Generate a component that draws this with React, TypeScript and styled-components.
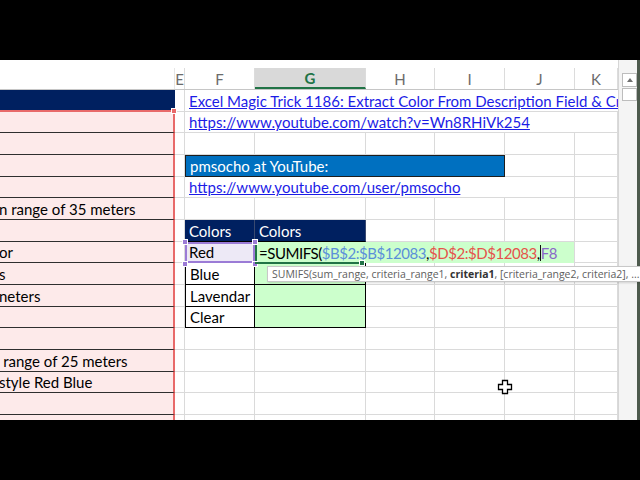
import styled, { createGlobalStyle, css } from "styled-components";

const GlobalStyle = createGlobalStyle`
  html, body { margin: 0; padding: 0; background: #000; }
  body { font-family: Lato, "Liberation Sans", sans-serif; }
`;

const COLS = "175px 10px 70px 111px 69px 70px 70px 43px";
const LETTERS = ["", "E", "F", "G", "H", "I", "J", "K"];

type Kind =
  | "plain"
  | "pink"
  | "navyTop"
  | "link"
  | "bar"
  | "head"
  | "box"
  | "green"
  | "edit"
  | "picked";

const Screen = styled.div`
  width: 640px;
  height: 480px;
  display: flex;
  flex-direction: column;
  background: #000;
  overflow: hidden;
`;

const Letterbox = styled.div`
  height: 60px;
  flex: none;
  background: #000;
`;

const Workbook = styled.div`
  height: 360px;
  flex: none;
  display: flex;
  background: #fff;
  position: relative;
  overflow: hidden;
`;

const Grid = styled.div`
  width: 618px;
  flex: none;
  padding-top: 8px;
  overflow: hidden;
`;

const HeaderRow = styled.div`
  display: grid;
  grid-template-columns: ${COLS};
  height: 22px;
  box-sizing: border-box;
  border-bottom: 1px solid #c6c6c6;
`;

const ColHead = styled.div<{ $active?: boolean; $blank?: boolean }>`
  display: flex;
  align-items: center;
  justify-content: center;
  box-sizing: border-box;
  border-right: 1px solid #dcdcdc;
  font-size: 15px;
  color: #6b6b6b;
  ${(p) =>
    p.$active &&
    css`
      background: #d9d9d9;
      color: #217346;
      font-weight: 700;
      border-bottom: 2px solid #217346;
    `}
  ${(p) =>
    p.$blank &&
    css`
      border-right: 1px solid #e6e6e6;
    `}
`;

const Row = styled.div`
  display: grid;
  grid-template-columns: ${COLS};
  height: 21.67px;
`;

const kindStyles: Record<Kind, ReturnType<typeof css> | string> = {
  plain: "",
  pink: css`
    background: #fdeaea;
    border-bottom: 1px solid #2f2f2f;
    border-right: 2px solid #e86a6a;
    padding-left: 0;
  `,
  navyTop: css`
    background: #002060;
    border-right: none;
    border-bottom: 2px solid #e86a6a;
  `,
  link: css`
    color: #1c1ce6;
    text-decoration: underline;
    text-underline-offset: 1px;
    border-right: none;
  `,
  bar: css`
    background: #0070c0;
    color: #fff;
    border: 1px solid #1d1d1d;
  `,
  head: css`
    background: #002060;
    color: #fff;
    border-right: 1px solid #3a4a70;
    border-bottom: 1px solid #000;
  `,
  box: css`
    border-left: 1px solid #000;
    border-right: 1px solid #000;
    border-bottom: 1px solid #000;
  `,
  green: css`
    background: #ccffcc;
    border-right: 1px solid #000;
    border-bottom: 1px solid #000;
  `,
  edit: css`
    background: #ccffcc;
    border-left: 2px solid #217346;
    border-bottom: none;
    padding-left: 2px;
    letter-spacing: -0.45px;
  `,
  picked: css`
    background: #ede9f6;
    border: 2px solid #9b7bd6;
    padding-left: 2px;
    padding-bottom: 0;
  `,
};

const Cell = styled.div<{ $kind: Kind; $span: number; $shift: number }>`
  grid-column: span ${(p) => p.$span};
  box-sizing: border-box;
  display: flex;
  align-items: flex-end;
  padding: 0 3px 1px 4px;
  white-space: nowrap;
  overflow: hidden;
  font-size: 15px;
  line-height: 17px;
  color: #000;
  border-right: 1px solid #dadada;
  border-bottom: 1px solid #dadada;
  ${(p) => kindStyles[p.$kind]}
  & > span {
    margin-left: ${(p) => p.$shift}px;
  }
`;

const Ref = styled.span<{ $tone: "blue" | "red" | "purple" }>`
  color: ${(p) =>
    p.$tone === "blue" ? "#5b8fd9" : p.$tone === "red" ? "#e5534b" : "#8a68c8"};
`;

const Caret = styled.i`
  display: inline-block;
  width: 1px;
  height: 16px;
  background: #111;
  vertical-align: -2px;
`;

const Scrollbar = styled.div`
  width: 22px;
  flex: none;
  display: flex;
  flex-direction: column;
  align-items: flex-start;
  padding: 13px 0 0 3px;
  box-sizing: border-box;
  background: #f4f4f4;
  border-left: 1px solid #d6d6d6;
  border-right: 3px solid #4d5a4d;
`;

const ArrowButton = styled.div`
  width: 15px;
  height: 14px;
  box-sizing: border-box;
  border: 1px solid #bdbdbd;
  background: #fff;
  display: flex;
  align-items: center;
  justify-content: center;
  &::after {
    content: "";
    border-left: 3px solid transparent;
    border-right: 3px solid transparent;
    border-bottom: 4px solid #707070;
  }
`;

const Thumb = styled.div`
  width: 15px;
  height: 13px;
  margin-top: 1px;
  box-sizing: border-box;
  border: 1px solid #bdbdbd;
  background: #fff;
`;

const Tooltip = styled.div`
  position: absolute;
  left: 267px;
  top: 206px;
  width: 390px;
  height: 16px;
  box-sizing: border-box;
  padding: 0 0 0 4px;
  background: #fff;
  border: 1px solid #c8c8c8;
  box-shadow: 1px 1px 2px rgba(0, 0, 0, 0.15);
  font-family: "Open Sans", "Noto Sans", sans-serif;
  font-size: 10.5px;
  line-height: 14px;
  color: #5e5e5e;
  white-space: nowrap;
  b {
    color: #333;
  }
`;

const Handle = styled.div<{ $x: number; $y: number; $color: string }>`
  position: absolute;
  left: ${(p) => p.$x - 3}px;
  top: ${(p) => p.$y - 3}px;
  width: 6px;
  height: 6px;
  background: ${(p) => p.$color};
  border: 1px solid #fff;
  box-sizing: border-box;
`;

const ActiveEdge = styled.div`
  position: absolute;
  left: 255px;
  top: 202px;
  width: 107px;
  height: 2px;
  background: #217346;
`;

const Pointer = styled.svg`
  position: absolute;
  left: 497px;
  top: 319px;
`;

type CellDef = { kind?: Kind; span?: number; text?: React.ReactNode; shift?: number };

const pink = (text?: string, shift = 0): CellDef => ({ kind: "pink", text, shift });
const blanks = (n: number): CellDef[] => Array.from({ length: n }, () => ({}));

const formula = (
  <span>
    =SUMIFS(<Ref $tone="blue">$B$2:$B$12083</Ref>,<Ref $tone="red">$D$2:$D$12083</Ref>,
    <Caret />
    <Ref $tone="purple">F8</Ref>
  </span>
);

const rows: CellDef[][] = [
  [
    { kind: "navyTop" },
    {},
    { kind: "link", span: 6, text: "Excel Magic Trick 1186: Extract Color From Description Field & Create Report" },
  ],
  [pink(), {}, { kind: "link", span: 5, text: "https://www.youtube.com/watch?v=Wn8RHiVk254" }, {}],
  [pink(), ...blanks(7)],
  [pink(), {}, { kind: "bar", span: 4, text: "pmsocho at YouTube:" }, {}, {}],
  [pink(), {}, { kind: "link", span: 4, text: "https://www.youtube.com/user/pmsocho" }, {}, {}],
  [pink("n range of 35 meters", -1), ...blanks(7)],
  [pink(), {}, { kind: "head", text: "Colors" }, { kind: "head", text: "Colors" }, ...blanks(4)],
  [pink("or", -1), {}, { kind: "picked", text: "Red" }, { kind: "edit", span: 4, text: formula }, {}],
  [pink("s", -1), {}, { kind: "box", text: "Blue" }, { kind: "green" }, ...blanks(4)],
  [pink("neters", -1), {}, { kind: "box", text: "Lavendar" }, { kind: "green" }, ...blanks(4)],
  [pink(), {}, { kind: "box", text: "Clear" }, { kind: "green" }, ...blanks(4)],
  [pink(), ...blanks(7)],
  [pink("n range of 25 meters", -9), ...blanks(7)],
  [pink("style Red Blue", -1), ...blanks(7)],
  [pink(), ...blanks(7)],
  [pink(), ...blanks(7)],
];

export default function App() {
  return (
    <Screen>
      <GlobalStyle />
      <Letterbox />
      <Workbook>
        <Grid>
          <HeaderRow>
            {LETTERS.map((l, i) => (
              <ColHead key={i} $active={l === "G"} $blank={l === ""}>
                {l}
              </ColHead>
            ))}
          </HeaderRow>
          {rows.map((cells, r) => (
            <Row key={r}>
              {cells.map((c, i) => (
                <Cell key={i} $kind={c.kind ?? "plain"} $span={c.span ?? 1} $shift={c.shift ?? 0}>
                  {typeof c.text === "string" ? <span>{c.text}</span> : c.text}
                </Cell>
              ))}
            </Row>
          ))}
        </Grid>
        <Scrollbar>
          <ArrowButton />
          <Thumb />
        </Scrollbar>

        <Handle $x={174} $y={51} $color="#e86a6a" />
        <Handle $x={185} $y={182} $color="#9b7bd6" />
        <Handle $x={255} $y={182} $color="#9b7bd6" />
        <Handle $x={185} $y={204} $color="#9b7bd6" />
        <Handle $x={255} $y={204} $color="#9b7bd6" />
        <ActiveEdge />
        <Handle $x={362} $y={203} $color="#217346" />
        <Tooltip>
          SUMIFS(sum_range, criteria_range1, <b>criteria1</b>, [criteria_range2, criteria2], ...
        </Tooltip>
        <Pointer width="16" height="16" viewBox="0 0 16 16">
          <path
            d="M5.5 1.5h5v4h4v5h-4v4h-5v-4h-4v-5h4z"
            fill="#fff"
            stroke="#000"
            strokeWidth="1.3"
            strokeLinejoin="miter"
          />
        </Pointer>
      </Workbook>
      <Letterbox />
    </Screen>
  );
}
